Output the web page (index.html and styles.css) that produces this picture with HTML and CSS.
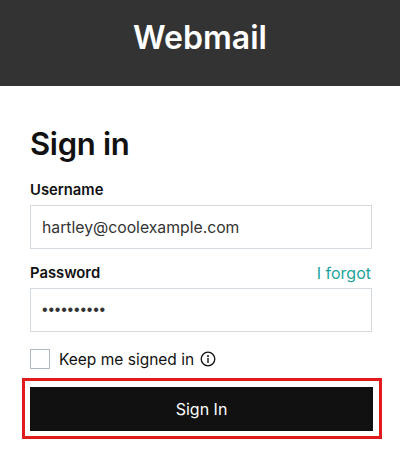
FILE: index.html
```html
<!DOCTYPE html>
<html lang="en">
<head>
    <meta charset="UTF-8">
    <meta name="viewport" content="width=device-width, initial-scale=1.0">
    <title>Webmail</title>
    <link rel="stylesheet" href="styles.css">
</head>
<body>
    <header class="top-bar">
        <h1>Webmail</h1>
    </header>

    <form class="login-form" onsubmit="return false">
        <h2>Sign in</h2>

        <label class="field-label" for="username">Username</label>
        <input class="text-input" type="text" id="username" value="hartley@coolexample.com">

        <div class="label-row">
            <label class="field-label" for="password">Password</label>
            <a class="forgot-link" href="#">I forgot</a>
        </div>
        <input class="text-input password-input" type="password" id="password" value="••••••••••">

        <div class="remember-row">
            <input class="checkbox" type="checkbox" id="remember">
            <label for="remember">Keep me signed in</label>
            <svg class="info-icon" viewBox="0 0 16 16" width="16" height="16" aria-hidden="true">
                <circle cx="8" cy="8" r="6.8" fill="none" stroke="#111" stroke-width="1.3"/>
                <circle cx="8" cy="4.9" r="1" fill="#111"/>
                <rect x="7.3" y="6.9" width="1.4" height="5" fill="#111"/>
            </svg>
        </div>

        <div class="highlight-box">
            <button class="submit-button" type="submit">Sign In</button>
        </div>
    </form>
</body>
</html>
```

FILE: styles.css
```css
body {
    margin: 0;
    background: #fff;
    color: #111;
    font-family: "Inter", "Liberation Sans", sans-serif;
}

.top-bar {
    height: 86px;
    background-color: #333;
    display: flex;
    justify-content: center;
    align-items: center;
}

.top-bar h1 {
    margin: 0 0 11px;
    color: #fff;
    font-size: 32px;
    font-weight: 600;
    line-height: 40px;
}

.login-form {
    padding: 38px 29px 0 30px;
    display: flex;
    flex-direction: column;
}

.login-form h2 {
    margin: 0 0 16px;
    font-size: 31px;
    font-weight: 600;
    letter-spacing: -0.3px;
    line-height: 40px;
}

.field-label {
    font-size: 14.8px;
    font-weight: 600;
    line-height: 20px;
}

.label-row {
    display: flex;
    justify-content: space-between;
    align-items: center;
    margin-top: 14px;
}

.forgot-link {
    color: #1ba39c;
    font-size: 16px;
    line-height: 20px;
    text-decoration: none;
}

.text-input {
    box-sizing: border-box;
    width: 342px;
    height: 44px;
    margin-top: 5px;
    padding: 0 11px;
    border: 1px solid #d4dbe0;
    border-radius: 0;
    color: #333;
    font-family: inherit;
    font-size: 15.75px;
}

.password-input {
    font-family: "Liberation Sans", sans-serif;
    font-size: 16px;
    letter-spacing: 0.8px;
}

.remember-row {
    display: flex;
    align-items: center;
    height: 20px;
    margin-top: 17px;
    font-size: 15.5px;
}

.checkbox {
    appearance: none;
    box-sizing: border-box;
    width: 20px;
    height: 20px;
    margin: 0 9px 0 0;
    border: 1px solid #aeb8c4;
}

.info-icon {
    margin-left: 6px;
}

.highlight-box {
    box-sizing: border-box;
    width: 360px;
    margin: 9px 0 0 -8px;
    padding: 6px 6px 5px 5px;
    border: 3px solid #e01b1b;
}

.submit-button {
    display: block;
    width: 100%;
    height: 44px;
    border: none;
    background-color: #111;
    color: #fff;
    font-family: inherit;
    font-size: 16px;
}
```
